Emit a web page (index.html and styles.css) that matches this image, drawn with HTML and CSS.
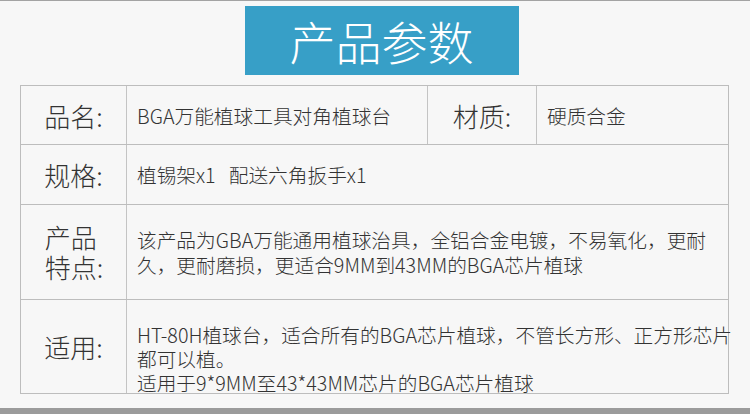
FILE: index.html
```html
<!DOCTYPE html>
<html lang="zh-CN">
<head>
<meta charset="utf-8">
<title>产品参数</title>
<link rel="stylesheet" href="styles.css">
</head>
<body>
<div class="topline"></div>
<div class="title-wrap">
  <div class="title">产品参数</div>
</div>
<div class="table">
  <div class="row r1">
    <div class="label l1">品名:</div>
    <div class="value v1">BGA万能植球工具对角植球台</div>
    <div class="label l2">材质:</div>
    <div class="value v2">硬质合金</div>
  </div>
  <div class="row r2">
    <div class="label l1">规格:</div>
    <div class="value vfull">植锡架x1&nbsp;&nbsp;&nbsp;配送六角扳手x1</div>
  </div>
  <div class="row r3">
    <div class="label l1"><div class="stack">产品<br>特点:</div></div>
    <div class="value vfull multi">该产品为GBA万能通用植球治具，全铝合金电镀，不易氧化，更耐<br>久，更耐磨损，更适合9MM到43MM的BGA芯片植球</div>
  </div>
  <div class="row r4">
    <div class="label l1">适用:</div>
    <div class="value vfull top">HT-80H植球台，适合所有的BGA芯片植球，不管长方形、正方形芯片<br>都可以植。<br>适用于9*9MM至43*43MM芯片的BGA芯片植球</div>
  </div>
</div>
<div class="bottombar"></div>
</body>
</html>
```
FILE: styles.css
```css
html, body {
  margin: 0;
  padding: 0;
}
body {
  background: #f7f7f7;
  width: 750px;
  height: 414px;
  overflow: hidden;
  font-family: "Noto Sans CJK SC", "Noto Sans", sans-serif;
  font-weight: 300;
  color: #333;
}
.topline {
  height: 1px;
  background: #a3a3a3;
}
.title-wrap {
  display: flex;
  justify-content: center;
  padding-top: 5px;
  padding-left: 13px;
}
.title {
  width: 274px;
  height: 69px;
  background: #379fc7;
  color: #fff;
  font-size: 46px;
  line-height: 69px;
  text-align: center;
}
.table {
  margin: 10px 0 0 20px;
  width: 709px;
  box-sizing: border-box;
  border: 1px solid #bdbdbd;
  border-bottom: none;
}
.row {
  display: flex;
  box-sizing: border-box;
  border-bottom: 1px solid #bdbdbd;
}
.r1 { height: 59px; }
.r2 { height: 60px; }
.r3 { height: 95px; }
.r4 { height: 94px; }
.label {
  box-sizing: border-box;
  flex-shrink: 0;
  display: flex;
  align-items: center;
  justify-content: center;
  font-size: 26px;
  border-right: 1px solid #c4c4c4;
  color: #333;
}
.l1 { width: 106px; }
.l2 { width: 109px; }
.stack {
  text-align: left;
  line-height: 30px;
  padding-left: 1px;
}
.value {
  box-sizing: border-box;
  flex-shrink: 0;
  min-width: 0;
  display: flex;
  align-items: center;
  padding-left: 10px;
  font-size: 19.7px;
  white-space: nowrap;
  color: #333;
}
.v1 {
  width: 301px;
  border-right: 1px solid #c4c4c4;
}
.v2 {
  width: 191px;
}
.vfull {
  width: 601px;
}
.multi {
  line-height: 25px;
}
.top {
  align-items: flex-start;
  padding-top: 23px;
  line-height: 24px;
}
.bottombar {
  margin-top: 14px;
  height: 6px;
  background: #9b9b9b;
}
```
